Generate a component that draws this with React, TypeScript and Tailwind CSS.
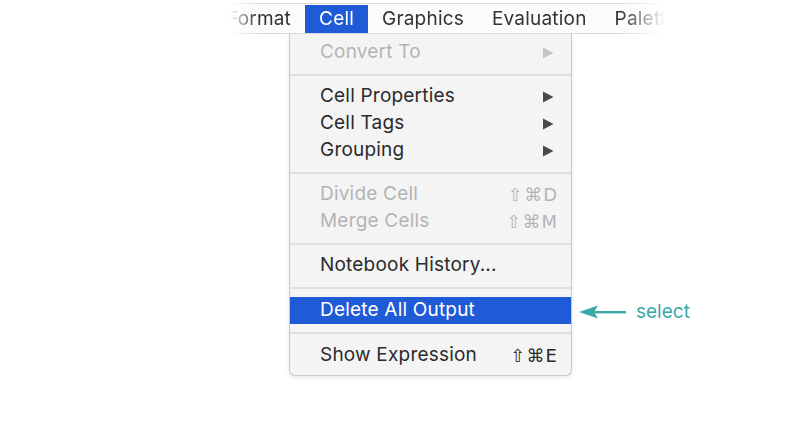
import React from "react";

type Row =
  | { kind: "item"; label: string; disabled?: boolean; submenu?: boolean; shortcut?: string; active?: boolean }
  | { kind: "sep" };

const rows: Row[] = [
  { kind: "item", label: "Convert To", disabled: true, submenu: true },
  { kind: "sep" },
  { kind: "item", label: "Cell Properties", submenu: true },
  { kind: "item", label: "Cell Tags", submenu: true },
  { kind: "item", label: "Grouping", submenu: true },
  { kind: "sep" },
  { kind: "item", label: "Divide Cell", disabled: true, shortcut: "⇧⌘D" },
  { kind: "item", label: "Merge Cells", disabled: true, shortcut: "⇧⌘M" },
  { kind: "sep" },
  { kind: "item", label: "Notebook History..." },
  { kind: "sep" },
  { kind: "item", label: "Delete All Output", active: true },
  { kind: "sep" },
  { kind: "item", label: "Show Expression", shortcut: "⇧⌘E" },
];

const menus = ["Format", "Cell", "Graphics", "Evaluation", "Palettes"];

function SubmenuArrow({ disabled }: { disabled?: boolean }) {
  return (
    <svg width="12" height="12" viewBox="0 0 12 12" className="shrink-0">
      <path d="M1 0.5 L11.5 6 L1 11.5 Z" fill={disabled ? "#c4c4c4" : "#4a4a4a"} />
    </svg>
  );
}

export default function App() {
  return (
    <div className="h-[437px] w-[799px] overflow-hidden bg-white font-['Inter','Liberation_Sans',sans-serif] text-[19px] tracking-[0.2px]">
      {/* menu bar */}
      <div className="ml-[213px] mt-[3px] flex h-[31px] w-[460px] items-stretch border-y border-[#dadada] bg-[#fbfbfb] pt-[1px] text-[#333333] [mask-image:linear-gradient(to_right,transparent_17px,black_44px,black_calc(100%-52px),transparent_calc(100%-8px))]">
        {menus.map((m) => (
          <div
            key={m}
            className={
              m === "Cell"
                ? "flex items-center bg-[#1f5ad7] px-[14px] text-white"
                : "flex items-center px-[14px]"
            }
          >
            {m}
          </div>
        ))}
      </div>

      {/* dropdown */}
      <div className="ml-[289px] flex w-[283px] flex-col rounded-b-[6px] border border-t-0 border-[#c9c9c9] bg-[#f4f4f4] pb-[6px] pt-[5px] shadow-[0_2px_4px_rgba(0,0,0,0.08)]">
        {rows.map((r, i) =>
          r.kind === "sep" ? (
            <div key={i} className="flex h-[17px] items-center">
              <div className="h-[2px] w-full bg-[#e0e0e0]" />
            </div>
          ) : (
            <div key={i} className="flex items-center">
              <div
                className={
                  r.active
                    ? "flex h-[27px] w-full items-center bg-[#1f5ad7] pl-[30px] pr-[17px] text-white"
                    : r.disabled
                      ? "flex h-[27px] w-full items-center pl-[30px] pr-[17px] text-[#b4b4b4]"
                      : "flex h-[27px] w-full items-center pl-[30px] pr-[17px] text-[#2b2b2b]"
                }
              >
                <span className="flex-1">{r.label}</span>
                {r.submenu && <SubmenuArrow disabled={r.disabled} />}
                {r.shortcut && (
                  <span className="-mr-[4px] font-['DejaVu_Sans','Inter',sans-serif] text-[18px] tracking-[1px]">
                    {r.shortcut}
                  </span>
                )}
              </div>
              {r.active && (
                <div className="-mr-[120px] ml-[8px] flex translate-y-[2px] items-center gap-[9px] text-[#3aa8a7]">
                  <svg width="48" height="14" viewBox="0 0 48 14" className="shrink-0">
                    <path d="M0 7 L19 0.5 L15 7 L19 13.5 Z" fill="#3aa8a7" />
                    <rect x="15" y="6" width="32" height="2.4" fill="#3aa8a7" />
                  </svg>
                  <span className="text-[19px] tracking-normal">select</span>
                </div>
              )}
            </div>
          )
        )}
      </div>
    </div>
  );
}
